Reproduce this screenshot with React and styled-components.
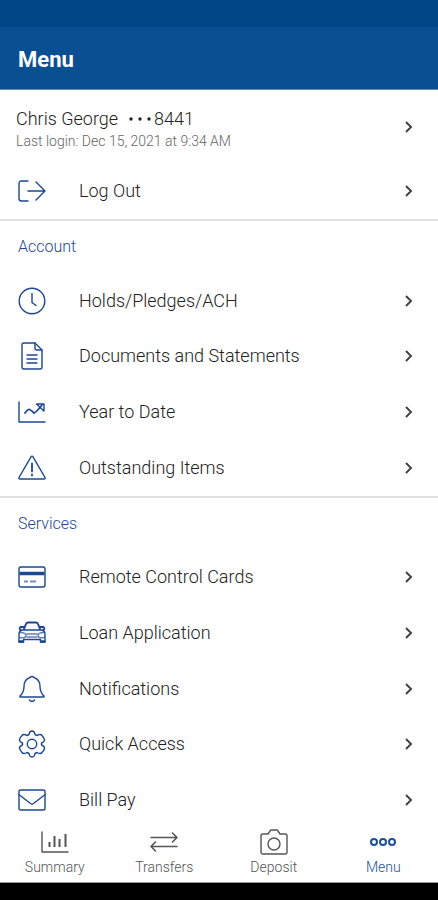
import React from "react";
import styled, { createGlobalStyle } from "styled-components";

const GlobalStyle = createGlobalStyle`
  * {
    box-sizing: border-box;
  }

  body {
    margin: 0;
    background: #fff;
    font-family: Roboto, "Liberation Sans", sans-serif;
  }
`;

const Page = styled.div`
  display: flex;
  flex-direction: column;
  min-height: 100vh;
`;

const StatusBar = styled.div`
  height: 27px;
  background: #004585;
`;

const Header = styled.header`
  display: flex;
  align-items: center;
  height: 63px;
  padding: 4px 18px 0;
  background: #0a4f92;
  border-bottom: 1px solid #7088bd;
`;

const Title = styled.h1`
  margin: 0;
  font-size: 22px;
  font-weight: 700;
  line-height: 26px;
  color: #fff;
`;

const Main = styled.main`
  display: flex;
  flex: 1;
  flex-direction: column;
`;

const Profile = styled.button`
  display: flex;
  align-items: center;
  justify-content: space-between;
  height: 73px;
  padding: 0 24px 0 16px;
  border: 0;
  background: none;
  color: #222;
  font-family: inherit;
  font-weight: 300;
  text-align: left;
`;

const ProfileName = styled.span`
  display: flex;
  align-items: center;
  gap: 8px;
  font-size: 18px;
  line-height: 22px;
`;

const Masked = styled.span`
  display: flex;
  align-items: center;
`;

const LastLogin = styled.span`
  display: block;
  font-size: 14px;
  line-height: 16px;
  color: #666;
`;

/* each section takes its share of the free height, one part per row */
const Section = styled.section`
  display: flex;
  flex: ${(props) => props.$rows} 0 auto;
  flex-direction: column;
  border-bottom: ${(props) => (props.$last ? "0" : "2px solid #e0e0e0")};
`;

const SectionTitle = styled.h2`
  margin: 0;
  padding: 16px 18px;
  font-size: 16px;
  font-weight: 300;
  line-height: 20px;
  color: #1f4592;
`;

const Row = styled.button`
  display: flex;
  flex: 1 0 48px;
  align-items: center;
  padding: 0 24px 0 18px;
  border: 0;
  background: none;
  color: #1d4791;
  font-family: inherit;
  text-align: left;
`;

const RowLabel = styled.span`
  flex: 1;
  margin-left: 33px;
  font-size: 18px;
  font-weight: 300;
  line-height: 22px;
  color: #222;
`;

const Icon = styled.svg`
  display: block;
  width: 28px;
  height: 28px;
  fill: none;
  stroke: currentColor;
  stroke-width: 1.4;
  stroke-linecap: round;
  stroke-linejoin: round;
`;

const Arrow = styled.svg`
  width: 10px;
  height: 14px;
  fill: none;
  stroke: #444;
  stroke-width: 2;
`;

const TabBar = styled.nav`
  display: flex;
  height: 55px;
  border-bottom: 1px solid #999;
`;

const Tab = styled.a`
  display: flex;
  flex: 1;
  flex-direction: column;
  align-items: center;
  font-size: 14px;
  font-weight: 300;
  line-height: 22px;
  text-decoration: none;
  color: ${(props) => (props.$active ? "#1d4f96" : "#555")};
`;

const BottomBar = styled.div`
  height: 17px;
  background: #000;
`;

const icons = {
  logout: (
    <>
      <path d="M10 4H3.5Q1 4 1 6.5v15Q1 24 3.5 24H10" />
      <path d="M10 14h17M18 5l9 9-9 9" />
    </>
  ),
  clock: (
    <>
      <circle cx="14" cy="14" r="12.8" />
      <path d="M14 6.5v9l4 3" />
    </>
  ),
  document: (
    <>
      <path d="M17 1H6Q4 1 4 3v22q0 2 2 2h16q2 0 2-2V8z" />
      <path d="M17 1v5q0 2 2 2h5M9 13h10M9 17h10M9 21h10" />
    </>
  ),
  trend: (
    <>
      <path d="M1 4v20h26" />
      <path d="M7 15q3-4 4.5-3.5T16 15q1.500 0 8-8" strokeWidth="1.8" />
      <path d="M18.5 6H26v7z" />
    </>
  ),
  warning: (
    <>
      <path d="M13 2.8Q14 1.5 15 2.8L27 23.5q.5 1.5-1 1.5H2q-1.5 0-1-1.5z" />
      <path d="M14 9.5v8M14 20.5v1" strokeWidth="1.8" />
    </>
  ),
  card: (
    <>
      <rect x="1" y="4" width="26" height="20" rx="2" />
      <path d="M1.5 10.5h25" strokeWidth="3.5" strokeLinecap="butt" />
      <path d="M6 18.5h4M12 18.5h6" strokeWidth="1.8" opacity="0.6" strokeLinecap="butt" />
    </>
  ),
  car: (
    <>
      <path d="M6 10l2-5q.5-1.500 2-1.500h8q1.500 0 2 1.500l2 5" strokeWidth="2" />
      <path d="M5.500 8H2.500Q.5 9.500 3 11.500M22.500 8h3q2 1.500-.5 3.500" strokeWidth="1.8" />
      <path d="M5 11h18q4 0 4 4.500V23h-4.500v-2.500h-17V23H1v-7.500Q1 11 5 11z" />
      <path d="M1.500 22.500h3.500M23 22.500h3.500" strokeWidth="2.500" />
      <path d="M2 13.500q6 0 6 3t-6 2M26 13.500q-6 0-6 3t6 2M9 15h10M9 18h10" opacity="0.700" />
    </>
  ),
  bell: (
    <>
      <path d="M12 2.5q2-2 4 0 6 2 6 9 0 6 4 9.500v1H2v-1q4-3.5 4-9.500 0-7 6-9z" />
      <path d="M11.5 25q2.500 3 5 0" />
    </>
  ),
  gear: (
    <>
      <path d="M11 4.5Q11.5 1 14 1t3 3.5l2 1Q22.5 3.5 24 5.5t2.5 4Q27 11.5 23.5 13v2q3.5 1.5 3 3.5T24 22.5q-1.5 2-5 0l-2 1Q16.5 27 14 27t-3-3.5l-2-1q-3.5 2-5 0t-2.5-4Q1 16.5 4.500 15v-2Q1 11.5 1.5 9.5T4 5.5q1.5-2 5 0z" />
      <circle cx="14" cy="14" r="4.7" />
    </>
  ),
  mail: (
    <>
      <rect x="1" y="4" width="26" height="20" rx="1.5" />
      <path d="M1.5 9l11 8.5q1.5 1 3 0l11-8.5" />
    </>
  ),
  chart: (
    <>
      <path d="M1 4v20h26" />
      <path d="M8.5 14v5M13.5 8v11M18.5 11v8M24.5 6v13" strokeWidth="2" strokeLinecap="butt" />
    </>
  ),
  transfer: (
    <path d="M1 9.5h26M22.5 5l4.5 4.5-4.5 4.5M27 18.5H1M5.5 14L1 18.5 5.5 23" strokeWidth="1.6" />
  ),
  camera: (
    <>
      <path d="M3 6h5l2-3q.5-1 1.5-1h5q1 0 1.5 1l2 3h5q2 0 2 2v16q0 2-2 2H3q-2 0-2-2V8q0-2 2-2z" />
      <circle cx="14" cy="16" r="6" />
    </>
  ),
  more: (
    <g strokeWidth="2">
      <circle cx="5" cy="14" r="3" />
      <circle cx="14" cy="14" r="3" />
      <circle cx="23" cy="14" r="3" />
    </g>
  ),
  dots: (
    <g fill="currentColor" stroke="none">
      <circle cx="5" cy="14" r="1.7" />
      <circle cx="14" cy="14" r="1.7" />
      <circle cx="23" cy="14" r="1.7" />
    </g>
  ),
};

const sections = [
  {
    rows: [{ icon: "logout", label: "Log Out" }],
  },
  {
    title: "Account",
    rows: [
      { icon: "clock", label: "Holds/Pledges/ACH" },
      { icon: "document", label: "Documents and Statements" },
      { icon: "trend", label: "Year to Date" },
      { icon: "warning", label: "Outstanding Items" },
    ],
  },
  {
    title: "Services",
    rows: [
      { icon: "card", label: "Remote Control Cards" },
      { icon: "car", label: "Loan Application" },
      { icon: "bell", label: "Notifications" },
      { icon: "gear", label: "Quick Access" },
      { icon: "mail", label: "Bill Pay" },
    ],
  },
];

const tabs = [
  { icon: "chart", label: "Summary" },
  { icon: "transfer", label: "Transfers" },
  { icon: "camera", label: "Deposit" },
  { icon: "more", label: "Menu", active: true },
];

const Glyph = ({ name }) => (
  <Icon viewBox="0 0 28 28" aria-hidden="true">
    {icons[name]}
  </Icon>
);

const Chevron = () => (
  <Arrow viewBox="0 0 10 14" aria-hidden="true">
    <path d="M2 2l5 5-5 5" />
  </Arrow>
);

const App = () => (
  <Page>
    <GlobalStyle />
    <StatusBar />
    <Header>
      <Title>Menu</Title>
    </Header>
    <Main>
      <Profile type="button">
        <span>
          <ProfileName>
            Chris George
            <Masked>
              <Glyph name="dots" />
              8441
            </Masked>
          </ProfileName>
          <LastLogin>Last login: Dec 15, 2021 at 9:34 AM</LastLogin>
        </span>
        <Chevron />
      </Profile>
      {sections.map((section, index) => (
        <Section key={index} $rows={section.rows.length} $last={index === sections.length - 1}>
          {section.title && <SectionTitle>{section.title}</SectionTitle>}
          {section.rows.map((row) => (
            <Row type="button" key={row.label}>
              <Glyph name={row.icon} />
              <RowLabel>{row.label}</RowLabel>
              <Chevron />
            </Row>
          ))}
        </Section>
      ))}
    </Main>
    <TabBar>
      {tabs.map((tab) => (
        <Tab href="#" key={tab.label} $active={tab.active}>
          <Glyph name={tab.icon} />
          {tab.label}
        </Tab>
      ))}
    </TabBar>
    <BottomBar />
  </Page>
);

export default App;
